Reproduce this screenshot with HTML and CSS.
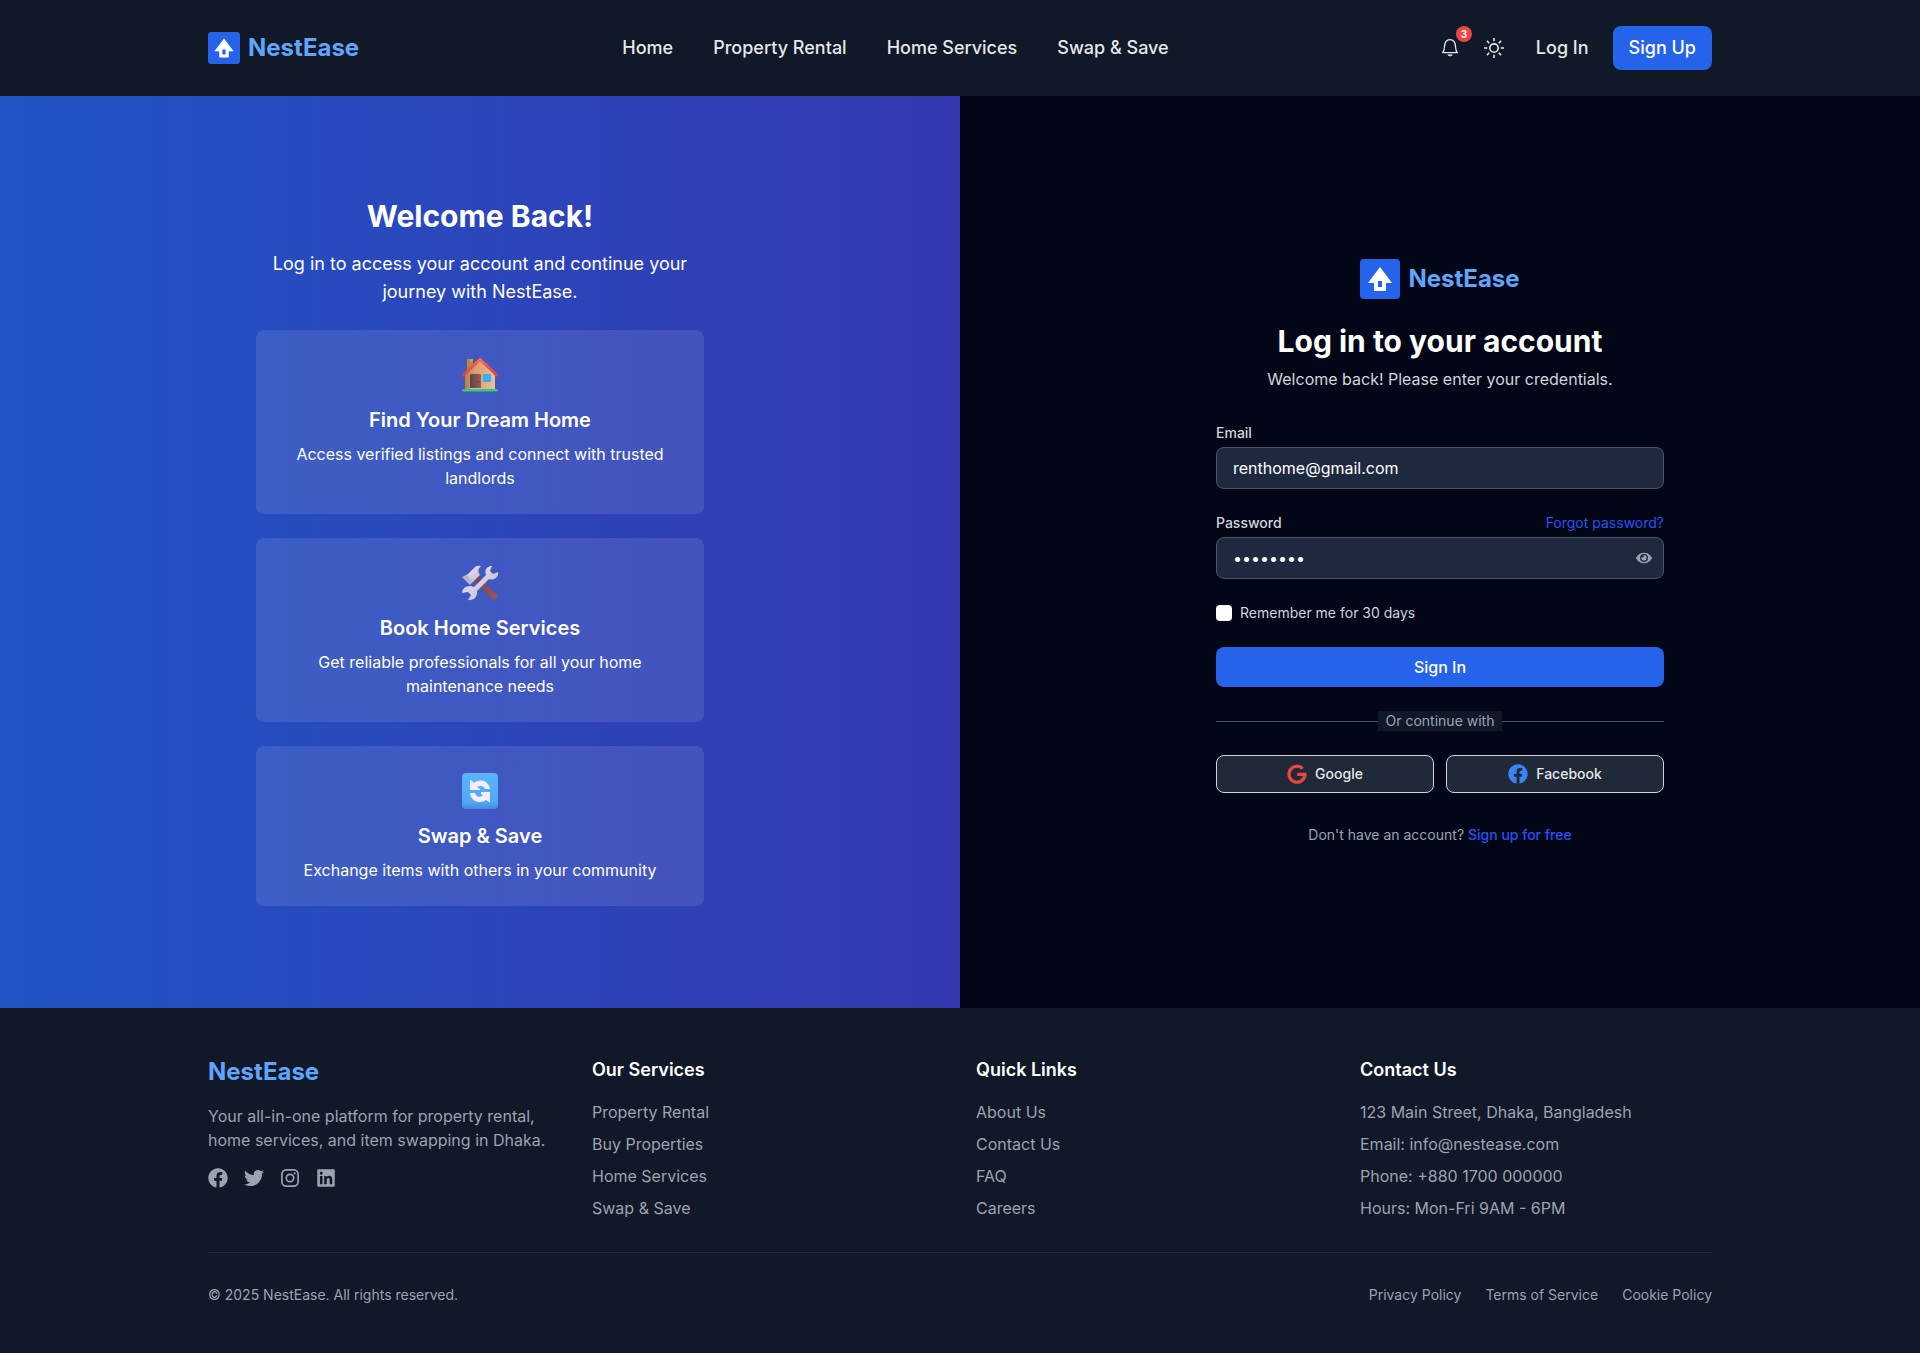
FILE: index.html
```html
<!DOCTYPE html>
<html lang="en">
<head>
<meta charset="utf-8">
<title>NestEase - Log In</title>
<link rel="stylesheet" href="styles.css">
</head>
<body>
<svg class="defs" width="0" height="0" aria-hidden="true">
  <symbol id="facebook" viewBox="0 0 512 512"><path d="M504 256C504 119 393 8 256 8S8 119 8 256c0 123.780 90.690 226.380 209.250 245V327.690h-63V256h63v-54.640c0-62.150 37-96.480 93.670-96.480 27.140 0 55.520 4.840 55.520 4.840v61h-31.280c-30.800 0-40.410 19.120-40.410 38.730V256h68.780l-11 71.690h-57.780V501C413.310 482.380 504 379.780 504 256z"/></symbol>
</svg>
<header class="site-header">
  <div class="container header-row">
    <a class="brand" href="#">
      <svg class="brand-mark" viewBox="0 0 40 40"><rect width="40" height="40" rx="4" fill="#2563eb"/><path fill="#fff" fill-rule="evenodd" d="M20 8 32 24h-6v8H14v-8H8zM18 22v6h4v-6z"/></svg>
      <span>NestEase</span>
    </a>
    <nav class="main-nav">
      <a href="#">Home</a><a href="#">Property Rental</a><a href="#">Home Services</a><a href="#">Swap &amp; Save</a>
    </nav>
    <div class="actions">
      <button class="icon-btn" aria-label="Notifications">
        <svg viewBox="0 0 24 24" fill="none" stroke="currentColor" stroke-width="1.500" stroke-linecap="round" stroke-linejoin="round"><path d="M3.200 17.600h17.600c-1.500-1.500-1.900-3.200-2.100-6.600-.2-4.900-2-9-6.700-9s-6.500 4.100-6.700 9c-.2 3.400-.6 5.100-2.100 6.600z"/><path d="M9.500 20.600c.6 1.300 4.400 1.300 5 0z" fill="currentColor" stroke-width="1"/></svg>
        <span class="badge">3</span>
      </button>
      <button class="icon-btn" aria-label="Toggle theme">
        <svg viewBox="0 0 24 24" fill="none" stroke="currentColor" stroke-width="1.900"><circle cx="12" cy="12" r="5"/><path d="M12 0v4M12 20v4M0 12h4M20 12h4M3.500 3.500 6.300 6.300M17.700 17.700l2.800 2.800M3.500 20.500l2.800-2.800M17.700 6.300l2.800-2.800"/></svg>
      </button>
      <a class="login-link" href="#">Log In</a>
      <a class="signup-link" href="#">Sign Up</a>
    </div>
  </div>
</header>

<main class="split">
  <section class="welcome">
    <div class="column">
      <h2>Welcome Back!</h2>
      <p class="lead">Log in to access your account and continue your journey with NestEase.</p>
      <div class="cards">
        <article class="card">
          <svg class="emoji" viewBox="0 0 36 36">
            <defs>
              <linearGradient id="wall"><stop offset="0" stop-color="#b87b50"/><stop offset=".3" stop-color="#d99b6c"/><stop offset="1" stop-color="#e9c19b"/></linearGradient>
              <linearGradient id="roof" x2="0" y2="1"><stop stop-color="#ff7043"/><stop offset="1" stop-color="#dc3b3b"/></linearGradient>
              <linearGradient id="door"><stop stop-color="#654044"/><stop offset="1" stop-color="#946056"/></linearGradient>
            </defs>
            <path fill="#bc854b" d="M5 2h6v13H5z"/><path fill="#d19b5b" d="M8 2h3v3H8z"/>
            <path fill="url(#wall)" d="M18 3 33 17v16H3V17z"/>
            <path fill="url(#door)" d="M8 18q0-1 1-1h9q1 0 1 1v14H8z"/><circle cx="16" cy="25" r=".7" fill="#53363b"/>
            <path fill="#2cb5fb" d="M21 17h8v8h-8z"/><path fill="#4d9ff0" d="M21 23h8v2h-8z"/>
            <path fill="url(#roof)" d="M18 .500 36 17v2.500h-2L18 4.500 2 19.500H0V17z"/>
            <path fill="#cec0b4" d="M8 31h11v2H8z"/><path fill="#36cc71" d="M2 32h32q2 0 2 2.500H0Q0 32 2 32z"/>
          </svg>
          <h3>Find Your Dream Home</h3>
          <p>Access verified listings and connect with trusted landlords</p>
        </article>
        <article class="card">
          <svg class="emoji" viewBox="0 0 36 36">
            <defs>
              <linearGradient id="steel" x2="1" y2="1"><stop stop-color="#eee7f5"/><stop offset="1" stop-color="#bdb5d0"/></linearGradient>
              <linearGradient id="wood" x2="1" y2="1"><stop stop-color="#6f454f"/><stop offset="1" stop-color="#9d5254"/></linearGradient>
            </defs>
            <path stroke="url(#wood)" stroke-width="6" stroke-linecap="round" d="m14 13 18 18.500"/>
            <path fill="#b9b2cf" d="M0 12 6 9 11 17 8 20z"/>
            <path fill="url(#steel)" d="M5 10 13 2q2-2 6-1-4 4-2 7l1 2-7 7z"/>
            <path fill="url(#steel)" d="m12 22 12-12c-2-5 1-9 6-9l-2 5 3 3 5-2c1 5-4 9-9 7L15 26c1 6-4 10-9 9l3-5-3-3-6 1c0-5 6-9 12-6z"/>
          </svg>
          <h3>Book Home Services</h3>
          <p>Get reliable professionals for all your home maintenance needs</p>
        </article>
        <article class="card">
          <svg class="emoji" viewBox="0 0 36 36">
            <defs><linearGradient id="tile" x2="0" y2="1"><stop stop-color="#65aff4"/><stop offset=".12" stop-color="#54b4fa"/><stop offset=".8" stop-color="#52a9f7"/><stop offset="1" stop-color="#458be0"/></linearGradient></defs>
            <rect width="36" height="36" rx="4" fill="url(#tile)"/>
            <path fill="#f5edff" d="M8 7h1l3 3c6-5 15-2 16 6h-5c-1-3-5-4-8-2l3 2v1H8zM28 29h-1l-3-2c-6 4-15 2-16-7h5c1 4 5 5 8 2l-2-1v-2h9z"/>
          </svg>
          <h3>Swap &amp; Save</h3>
          <p>Exchange items with others in your community</p>
        </article>
      </div>
    </div>
  </section>

  <section class="login">
    <div class="column">
      <a class="brand brand-large" href="#">
        <svg class="brand-mark" viewBox="0 0 40 40"><rect width="40" height="40" rx="4" fill="#2563eb"/><path fill="#fff" fill-rule="evenodd" d="M20 8 32 24h-6v8H14v-8H8zM18 22v6h4v-6z"/></svg>
        <span>NestEase</span>
      </a>
      <h1>Log in to your account</h1>
      <p class="sub">Welcome back! Please enter your credentials.</p>
      <form class="form">
        <div class="field">
          <label for="email">Email</label>
          <input id="email" type="text" value="renthome@gmail.com">
        </div>
        <div class="field">
          <div class="label-row"><label for="password">Password</label><a class="link" href="#">Forgot password?</a></div>
          <div class="password-box">
            <input id="password" type="password" value="renthome">
            <svg class="eye" viewBox="0 0 576 512"><path fill="currentColor" d="M572.520 241.400C518.290 135.590 410.930 64 288 64S57.680 135.640 3.480 241.410a32.350 32.350 0 0 0 0 29.190C57.710 376.410 165.070 448 288 448s230.320-71.640 284.520-177.410a32.350 32.350 0 0 0 0-29.190zM288 400a144 144 0 1 1 144-144 143.930 143.930 0 0 1-144 144zm0-240a95.310 95.310 0 0 0-25.310 3.790 47.850 47.850 0 0 1-66.900 66.900A95.780 95.780 0 1 0 288 160z"/></svg>
          </div>
        </div>
        <label class="remember"><input type="checkbox"><span>Remember me for 30 days</span></label>
        <button class="submit" type="button">Sign In</button>
      </form>
      <div class="divider"><span>Or continue with</span></div>
      <div class="social">
        <button><svg class="google" viewBox="0 0 20 20" fill="none" stroke="#ef4444" stroke-width="3.200"><path d="M15.700 4.600A8 8 0 1 0 18 10.400H10.200"/></svg>Google</button>
        <button><svg class="fb" fill="#3b82f6"><use href="#facebook"/></svg>Facebook</button>
      </div>
      <p class="signup-note">Don't have an account? <a class="link" href="#">Sign up for free</a></p>
    </div>
  </section>
</main>

<footer class="site-footer">
  <div class="container">
    <div class="footer-grid">
      <div>
        <h2 class="footer-brand">NestEase</h2>
        <p class="about">Your all-in-one platform for property rental, home services, and item swapping in Dhaka.</p>
        <div class="socials">
          <svg><use href="#facebook"/></svg>
          <svg viewBox="0 0 512 512"><path d="M459.370 151.716c.325 4.548.325 9.097.325 13.645 0 138.720-105.583 298.558-298.558 298.558-59.452 0-114.680-17.219-161.137-47.106 8.447.974 16.568 1.299 25.340 1.299 49.055 0 94.213-16.568 130.274-44.832-46.132-.975-84.792-31.188-98.112-72.772 6.498.974 12.995 1.624 19.818 1.624 9.421 0 18.843-1.300 27.614-3.573-48.081-9.747-84.143-51.980-84.143-102.985v-1.299c13.969 7.797 30.214 12.670 47.431 13.319-28.264-18.843-46.781-51.005-46.781-87.391 0-19.492 5.197-37.360 14.294-52.954 51.655 63.675 129.300 105.258 216.365 109.807-1.624-7.797-2.599-15.918-2.599-24.040 0-57.828 46.782-104.934 104.934-104.934 30.213 0 57.502 12.670 76.670 33.137 23.715-4.548 46.456-13.320 66.599-25.340-7.798 24.366-24.366 44.833-46.132 57.827 21.117-2.273 41.584-8.122 60.426-16.243-14.292 20.791-32.161 39.308-52.628 54.253z"/></svg>
          <svg viewBox="0 0 20 20"><rect x="1.900" y="1.900" width="16.200" height="16.200" rx="4.400" fill="none" stroke="currentColor" stroke-width="1.700"/><circle cx="10" cy="10" r="3.700" fill="none" stroke="currentColor" stroke-width="1.700"/><circle cx="14.700" cy="5.300" r="1.100"/></svg>
          <svg viewBox="0 0 448 512"><path d="M416 32H31.900C14.300 32 0 46.500 0 64.300v383.400C0 465.500 14.300 480 31.900 480H416c17.600 0 32-14.500 32-32.300V64.300c0-17.800-14.400-32.300-32-32.300zM135.400 416H69V202.200h66.500V416zm-33.200-243c-21.300 0-38.500-17.300-38.500-38.500S80.900 96 102.200 96c21.200 0 38.500 17.300 38.500 38.500 0 21.300-17.200 38.500-38.500 38.500zm282.100 243h-66.400V312c0-24.800-.5-56.700-34.500-56.700-34.600 0-39.900 27-39.900 54.900V416h-66.400V202.200h63.700v29.200h.9c8.900-16.800 30.600-34.500 62.900-34.500 67.200 0 79.700 44.300 79.700 101.900V416z"/></svg>
        </div>
      </div>
      <div><h4>Our Services</h4><ul><li>Property Rental</li><li>Buy Properties</li><li>Home Services</li><li>Swap &amp; Save</li></ul></div>
      <div><h4>Quick Links</h4><ul><li>About Us</li><li>Contact Us</li><li>FAQ</li><li>Careers</li></ul></div>
      <div><h4>Contact Us</h4><ul><li>123 Main Street, Dhaka, Bangladesh</li><li>Email: info@nestease.com</li><li>Phone: +880 1700 000000</li><li>Hours: Mon-Fri 9AM - 6PM</li></ul></div>
    </div>
    <div class="legal">
      <span>© 2025 NestEase. All rights reserved.</span>
      <nav><a href="#">Privacy Policy</a><a href="#">Terms of Service</a><a href="#">Cookie Policy</a></nav>
    </div>
  </div>
</footer>
</body>
</html>
```
FILE: styles.css
```css
*, *::before, *::after { box-sizing: border-box; }
body { margin: 0; font: 16px/24px Inter, "Liberation Sans", sans-serif; color: #e5e7eb; background: #020617; }
h1, h2, h3, h4, p, ul { margin: 0; padding: 0; }
ul { list-style: none; }
a { color: inherit; text-decoration: none; }
button, input { font: inherit; color: inherit; margin: 0; }
button { border: 0; background: none; padding: 0; }
svg { display: block; flex: none; }
.defs { position: absolute; }
.container { max-width: 1504px; margin: 0 auto; }

.site-header { background: #111827; height: 96px; }
.header-row { height: 96px; display: flex; align-items: center; justify-content: space-between; }
.brand { display: flex; align-items: center; gap: 8px; font-size: 24px; line-height: 32px; font-weight: 700; color: #60a5fa; }
.brand-mark { width: 32px; height: 32px; }
.main-nav { display: flex; gap: 40px; font-size: 18px; line-height: 28px; font-weight: 500; }
.actions { display: flex; align-items: center; gap: 8px; font-size: 18px; line-height: 28px; font-weight: 500; }
.icon-btn { position: relative; padding: 8px; color: #e5e7eb; }
.icon-btn svg { width: 20px; height: 20px; }
.badge { position: absolute; top: -4px; right: -4px; width: 16px; height: 16px; border-radius: 50%; background: #ef4444; color: #fff; font-size: 10px; line-height: 16px; font-weight: 700; text-align: center; }
.login-link { padding: 8px 16px; }
.signup-link { padding: 8px 16px; border-radius: 8px; background: #2563eb; color: #fff; }

.split { display: grid; grid-template-columns: 1fr 1fr; height: 912px; }
.split > section { display: flex; align-items: center; }
.column { width: 448px; text-align: center; }
.welcome { justify-content: center; background: linear-gradient(to right, #2154c6, #3538b0); color: #fff; }
.login { padding-left: 256px; }
.welcome h2, .login h1 { font-size: 30px; line-height: 36px; font-weight: 700; color: #fff; }
.lead { margin-top: 16px; font-size: 18px; line-height: 28px; }
.cards { display: flex; flex-direction: column; gap: 24px; margin-top: 24px; }
.card { padding: 24px; border-radius: 8px; background: rgba(255, 255, 255, .1); }
.emoji { width: 36px; height: 36px; margin: 3px auto 13px; }
.card h3 { font-size: 20px; line-height: 28px; font-weight: 600; margin-bottom: 8px; }

.brand-large { justify-content: center; margin-bottom: 24px; }
.brand-large .brand-mark { width: 40px; height: 40px; }
.sub { margin-top: 8px; color: #d1d5db; }
.form { margin-top: 32px; text-align: left; font-size: 14px; line-height: 20px; }
.field { margin-bottom: 24px; }
.field label { display: block; margin-bottom: 4px; font-weight: 500; color: #d1d5db; }
.label-row { display: flex; justify-content: space-between; }
.link { color: #2453f5; }
.field input { display: block; width: 100%; height: 42px; padding: 8px 16px; font-size: 16px; line-height: 24px; color: #fff; background: #1e2940; border: 1px solid #4b5563; border-radius: 8px; }
.password-box { position: relative; }
.eye { position: absolute; right: 12px; top: 13px; width: 16px; height: 16px; color: #9ca3af; }
.remember { display: flex; align-items: center; gap: 8px; color: #d1d5db; }
.remember input { appearance: none; width: 16px; height: 16px; border-radius: 4px; background: #fff; }
.submit { width: 100%; margin-top: 24px; height: 40px; border-radius: 8px; background: #2563eb; color: #fff; font-size: 16px; font-weight: 500; text-align: center; }
.divider { display: flex; align-items: center; margin: 24px 0; font-size: 14px; line-height: 20px; color: #9ca3af; }
.divider::before, .divider::after { content: ""; flex: 1; height: 1px; background: #4b5563; }
.divider span { padding: 0 8px; background: #111827; }
.social { display: grid; grid-template-columns: 1fr 1fr; gap: 12px; }
.social button { display: flex; align-items: center; justify-content: center; gap: 8px; height: 38px; border: 1px solid #d1d5db; border-radius: 8px; background: #1f2937; font-size: 14px; font-weight: 500; }
.social svg { width: 20px; height: 20px; }
.signup-note { margin-top: 32px; font-size: 14px; line-height: 20px; color: #9ca3af; }
.signup-note .link { font-weight: 500; }

.site-footer { background: #111827; padding: 48px 0; color: #9ca3af; }
.footer-grid { display: grid; grid-template-columns: repeat(4, 1fr); gap: 32px; }
.footer-brand { font-size: 24px; line-height: 32px; font-weight: 700; color: #60a5fa; margin-bottom: 16px; }
.socials { display: flex; gap: 16px; margin-top: 16px; }
.socials svg { width: 20px; height: 20px; fill: currentColor; }
.site-footer h4 { font-size: 18px; line-height: 28px; font-weight: 600; color: #fff; margin-bottom: 16px; }
.site-footer ul { display: flex; flex-direction: column; gap: 8px; }
.legal { display: flex; justify-content: space-between; margin-top: 32px; padding-top: 32px; border-top: 1px solid #1f2937; font-size: 14px; line-height: 20px; }
.legal nav { display: flex; gap: 24px; }
```
